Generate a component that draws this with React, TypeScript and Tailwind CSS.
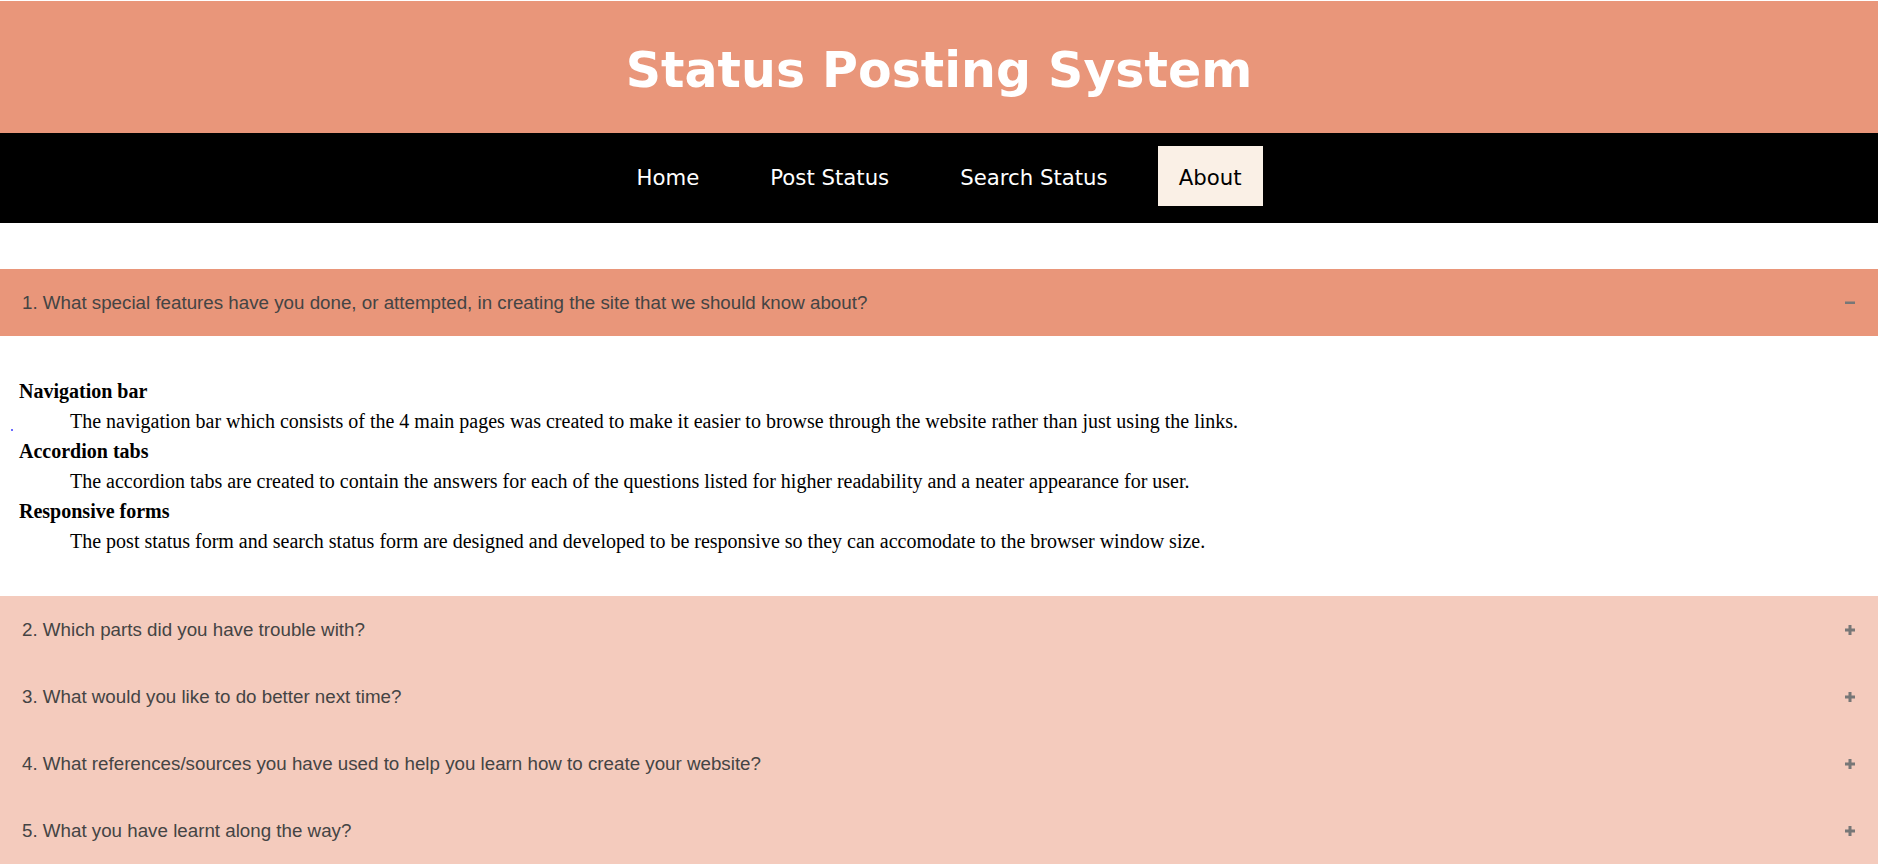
import React from 'react';

const navLinks = ['Home', 'Post Status', 'Search Status', 'About'];

const questions = [
  '1. What special features have you done, or attempted, in creating the site that we should know about?',
  '2. Which parts did you have trouble with?',
  '3. What would you like to do better next time?',
  '4. What references/sources you have used to help you learn how to create your website?',
  '5. What you have learnt along the way?',
];

const features = [
  {
    title: 'Navigation bar',
    text: 'The navigation bar which consists of the 4 main pages was created to make it easier to browse through the website rather than just using the links.',
  },
  {
    title: 'Accordion tabs',
    text: 'The accordion tabs are created to contain the answers for each of the questions listed for higher readability and a neater appearance for user.',
  },
  {
    title: 'Responsive forms',
    text: 'The post status form and search status form are designed and developed to be responsive so they can accomodate to the browser window size.',
  },
];

const ToggleIcon: React.FC<{ open: boolean }> = ({ open }) => (
  <svg width="10" height="10" viewBox="0 0 10 10" className="shrink-0">
    <rect x="0" y={open ? 3.5 : 3.5} width="10" height={open ? 2.5 : 3} fill="#777" />
    {!open && <rect x="3.5" y="0" width="3" height="10" fill="#777" />}
  </svg>
);

const App: React.FC = () => {
  const openIndex = 0;

  return (
    <div className="w-[1878px] pt-px bg-white font-['Liberation_Sans',Arial,sans-serif]">
      <header className="bg-[#e9967a] h-[132px] flex items-center justify-center">
        <h1 className="text-white font-bold text-[49px] leading-none pt-[6px] font-['DejaVu_Sans',Verdana,sans-serif]">
          Status Posting System
        </h1>
      </header>

      <nav className="bg-black pt-[13px] pb-[17px] flex justify-center gap-[29px] font-['DejaVu_Sans',Verdana,sans-serif]">
        {navLinks.map((link) => (
          <a
            key={link}
            href="#"
            className={`h-[60px] px-[21px] pt-[3px] flex items-center text-[21.25px] ${
              link === 'About' ? 'bg-[#faf0e6] text-black' : 'text-white'
            }`}
          >
            {link}
          </a>
        ))}
      </nav>

      <div className="mt-[46px]">
        {questions.map((q, i) => (
          <div key={q}>
            <button
              className={`w-full h-[67px] pl-[22px] pr-[23px] pt-px flex items-center justify-between text-left text-[18.75px] text-[#444] ${
                i === openIndex ? 'bg-[#e9967a]' : 'bg-[#f4cbbd]'
              }`}
            >
              <span>{q}</span>
              <ToggleIcon open={i === openIndex} />
            </button>
            {i === openIndex && (
              <div className="relative bg-white px-[19px] py-[40px]">
                <span className="absolute left-[11px] top-[93px] w-[2px] h-[2px] bg-[#3b3bff] rounded-full" />
                <dl className="font-['Liberation_Serif','Times_New_Roman',serif] text-[20px] leading-[30px] text-black">
                  {features.map((f) => (
                    <React.Fragment key={f.title}>
                      <dt className="font-bold">{f.title}</dt>
                      <dd className="ml-[51px]">{f.text}</dd>
                    </React.Fragment>
                  ))}
                </dl>
              </div>
            )}
          </div>
        ))}
      </div>
    </div>
  );
};

export default App;
